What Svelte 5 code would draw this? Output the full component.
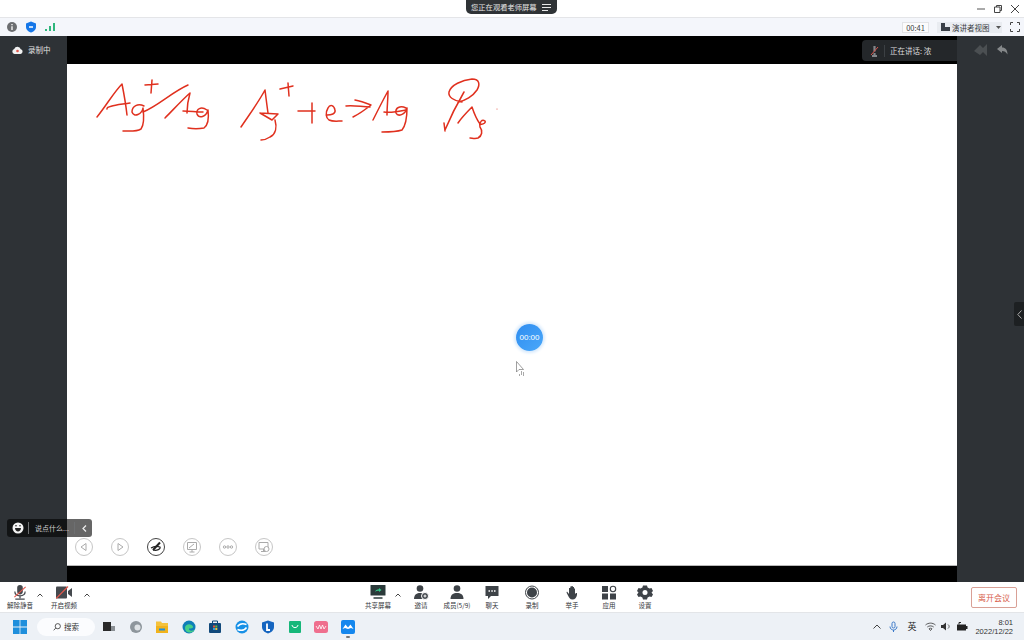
<script>
	const strokes = [
		// Ag+/Ag
		'M97 117C106 106 114 92 122 84C124 94 126 106 127 115',
		'M107 109C106 106 118 105 130 103',
		'M144 106C138 103 132 106 132 112C134 118 142 114 143 108C144 116 144 125 141 129C136 132 129 131 123 131',
		'M145 85L158 84M152 80L151 93',
		'M143 112C158 106 172 92 188 85',
		'M165 118C173 110 182 100 190 93C188 100 187 107 187 113',
		'M183 111C190 111 196 112 203 112',
		'M207 110C201 106 196 109 197 114C199 119 206 117 208 110C209 118 208 125 204 128C199 129 193 129 188 128',
		// Ag+ + e -> Ag
		'M241 127C249 115 258 103 265 90C266 98 267 106 268 113',
		'M260 113L278 114L272 120L260 113',
		'M275 120C277 127 276 134 270 137C267 139 264 140 261 140',
		'M280 89L293 86M288 83L289 96',
		'M298 111L315 111M312 103L312 123',
		'M327 115C331 115 336 114 335 110C334 105 330 104 328 108C325 113 326 118 329 120C333 122 338 121 342 121',
		'M346 106C354 105 362 107 370 107M355 100C361 101 366 103 371 105C366 109 359 114 353 117',
		'M373 120C378 110 383 100 388 91C388 99 387 107 387 115',
		'M384 112C390 113 396 112 406 110',
		'M406 108C400 105 395 108 396 113C398 117 405 115 407 108C407 116 406 125 402 130C396 132 389 132 382 132',
		// phi Ag
		'M462 102C454 101 448 97 449 92C451 85 462 80 472 79C480 79 480 85 477 90C473 96 465 101 458 102',
		'M464 92C457 104 450 118 445 130M444 123L445 131',
		'M458 123C462 117 467 112 472 107C474 113 477 120 480 124C484 125 486 122 485 121C482 119 479 122 480 127C483 131 482 136 478 138C475 139 472 138 470 138'
	];

	const slideTools = ['prev', 'next', 'pen', 'draw', 'more', 'screen'];
	const tools = [
		{ id: 'share', label: '共享屏幕' },
		{ id: 'caret' },
		{ id: 'invite', label: '邀请' },
		{ id: 'members', label: '成员(5/9)' },
		{ id: 'chat', label: '聊天' },
		{ id: 'record', label: '录制' },
		{ id: 'hand', label: '举手' },
		{ id: 'apps', label: '应用' },
		{ id: 'settings', label: '设置' }
	];
</script>

<div class="page">
	<header class="titlebar">
		<div class="notice">
			<span>您正在观看老师屏幕</span>
			<svg width="9" height="7" viewBox="0 0 9 7"><path d="M0 .5H9M0 3.5H9M0 6.5H6" stroke="#e8e8e8" fill="none" /></svg>
		</div>
		<div class="window-buttons">
			<svg width="10" height="10" viewBox="0 0 10 10"><path d="M1 5H9" stroke="#555" /></svg>
			<svg width="10" height="10" viewBox="0 0 10 10"><path d="M1.5 3H7V8.500H1.500ZM3.500 3V1.500H8.500V6.500H7" stroke="#444" fill="none" /></svg>
			<svg width="10" height="10" viewBox="0 0 10 10"><path d="M1 1L9 9M9 1L1 9" stroke="#444" /></svg>
		</div>
	</header>

	<div class="statusbar">
		<div class="status-icons">
			<svg width="12" height="12" viewBox="0 0 12 12"><circle cx="6" cy="6" r="5" fill="#6b6d70" /><path d="M6 3V4.200M6 5.200V9" stroke="#fff" stroke-width="1.300" /></svg>
			<svg width="12" height="12" viewBox="0 0 12 12"><path d="M6 .5L11 2.500V6C11 9 8.500 10.800 6 11.500C3.500 10.800 1 9 1 6V2.500Z" fill="#1677e8" /><path d="M4 6H8" stroke="#fff" stroke-width="1.500" /></svg>
			<svg width="12" height="12" viewBox="0 0 12 12"><path d="M2 8V10M6 5V10M10 2V10" stroke="#2fb67c" stroke-width="2" /></svg>
		</div>
		<div class="status-right">
			<span class="duration">00:41</span>
			<span class="view-select">
				<svg width="9" height="8" viewBox="0 0 9 8"><path d="M0 0H4V4H9V8H0Z" fill="#3a4048" /></svg>
				演讲者视图
				<svg class="caret-down" width="5" height="3" viewBox="0 0 5 3"><path d="M0 0H5L2.500 3Z" fill="#555" /></svg>
			</span>
			<svg width="10" height="10" viewBox="0 0 10 10"><path d="M.5 3V.5H3M7 .5H9.500V3M9.500 7V9.500H7M3 9.500H.5V7" stroke="#444" fill="none" /></svg>
		</div>
	</div>

	<main class="stage">
		<aside class="side">
			<div class="recording">
				<svg width="11" height="8" viewBox="0 0 11 8"><path d="M2.500 8A2.500 2.500 0 0 1 2.200 3.100A3.500 3.500 0 0 1 8.800 3.300A2.400 2.400 0 0 1 8.500 8Z" fill="#f1f1f1" /><circle cx="5.500" cy="5" r="1.300" fill="#e2574c" /></svg>
				<span>录制中</span>
			</div>
		</aside>

		<div class="canvas">
			<div class="slide">
				<svg class="ink" width="890" height="500" viewBox="67 64 890 500">
					{#each strokes as d}
						<path {d} />
					{/each}
					<circle cx="497" cy="109" r=".5" />
				</svg>

				<div class="slide-tools">
					{#each slideTools as t}
						<span class="round" class:dark={t === 'pen'}>
							<svg width="14" height="14" viewBox="0 0 14 14" fill="none" stroke={t === 'pen' ? '#222' : '#aaa'}>
								{#if t === 'prev'}
									<path d="M9 3.500V10.500L4 7Z" />
								{:else if t === 'next'}
									<path d="M5 3.500V10.500L10 7Z" />
								{:else if t === 'pen'}
									<path d="M2 8C5 6 8 6 11 7C12 9 8 11 4 10" stroke-width="1.200" />
									<path d="M4 10L11 2.500" stroke-width="2" />
								{:else if t === 'draw'}
									<path d="M2.500 2.500H11.500V9.500H2.500ZM7 9.500V12M4.500 12H9.500M4 8L9 4" />
								{:else if t === 'more'}
									<circle cx="3.500" cy="7" r="1.200" /><circle cx="7" cy="7" r="1.200" /><circle cx="10.500" cy="7" r="1.200" />
								{:else}
									<path d="M2 2.500H11V9H2ZM6.500 9V11.500M4 11.500H9" /><circle cx="9.500" cy="9" r="2.500" fill="#fff" />
								{/if}
							</svg>
						</span>
					{/each}
				</div>

				<div class="timer">00:00</div>
				<svg class="pointer" width="10" height="15" viewBox="0 0 10 15"><path d="M.5 .5V11L3 8.500H7.500Z" fill="#fff" stroke="#777" stroke-width=".7" /><path d="M5 11H6M7 12H8M5 13H6M7 14H8M3 14H4" stroke="#555" /></svg>
			</div>
		</div>

		<aside class="side right">
			<div class="undo">
				<svg width="22" height="12" viewBox="0 0 22 12"><path d="M0 7L6 1L11 6L6 11ZM7 6L13 0V12Z" fill="#4b4f52" /></svg>
				<svg width="11" height="10" viewBox="0 0 11 10"><path d="M0 4L5 0V2.500C8.500 2.500 10.500 5 10.500 9.500C9 7 7.500 6 5 6V8Z" fill="#85888a" /></svg>
			</div>
			<button class="collapse" aria-label="展开">
				<svg width="5" height="9" viewBox="0 0 5 9"><path d="M4.500 .5L.8 4.500L4.500 8.500" stroke="#aaa" fill="none" /></svg>
			</button>
		</aside>

		<div class="speaker">
			<svg width="9" height="12" viewBox="0 0 9 12"><path d="M4.500 1V6.500M2 11H7M4.500 8V11" stroke="#83868a" stroke-width="2.200" /><path d="M1 10L8 2" stroke="#d9534a" /></svg>
			<i></i>
			<span>正在讲话: 浓</span>
		</div>

		<div class="chat-pill">
			<svg width="12" height="12" viewBox="0 0 12 12"><circle cx="6" cy="6" r="5.500" fill="#f4f4f4" /><path d="M3 6H9C9 8 7.500 9.500 6 9.500C4.500 9.500 3 8 3 6Z" fill="#222" /><circle cx="4" cy="3.800" r=".8" fill="#222" /><circle cx="8" cy="3.800" r=".8" fill="#222" /></svg>
			<i></i>
			<span class="say">说点什么...</span>
			<i></i>
			<svg class="chev" width="5" height="7" viewBox="0 0 5 7"><path d="M4 .5L1 3.500L4 6.500" stroke="#eee" stroke-width="1.200" fill="none" /></svg>
		</div>
	</main>

	<footer class="toolbar">
		<div class="tools-left">
			<div class="tool mic">
				<svg width="18" height="16" viewBox="0 0 18 16">
					<rect x="6" y="0" width="6" height="10" rx="3" fill="#45494e" />
					<path d="M3.500 7C3.500 10 6 11.500 9 11.500C12 11.500 14.500 10 14.500 7M9 11.500V14M4 15H14" stroke="#45494e" stroke-width="1.300" fill="none" />
					<path d="M3 13L15 2" stroke="#e2574c" stroke-width="1.200" />
				</svg>
				<span>解除静音</span>
			</div>
			<svg class="up" width="6" height="4" viewBox="0 0 6 4"><path d="M.5 3.500L3 1L5.500 3.500" stroke="#444" fill="none" /></svg>
			<div class="tool cam">
				<svg width="16" height="12" viewBox="0 0 16 12">
					<rect x="0" y="0" width="11" height="12" rx="1" fill="#45494e" />
					<path d="M12 4.500L16 1.500V10.500L12 7.500Z" fill="#45494e" />
					<path d="M0 12L12 0" stroke="#e2574c" stroke-width="1.200" />
				</svg>
				<span>开启视频</span>
			</div>
			<svg class="up" width="6" height="4" viewBox="0 0 6 4"><path d="M.5 3.500L3 1L5.500 3.500" stroke="#444" fill="none" /></svg>
		</div>

		<div class="tools-center">
			{#each tools as t}
				{#if t.id === 'caret'}
					<svg class="up" width="6" height="4" viewBox="0 0 6 4"><path d="M.5 3.500L3 1L5.500 3.500" stroke="#444" fill="none" /></svg>
				{:else}
					<div class="tool">
						<svg width="16" height="15" viewBox="0 0 16 15">
							{#if t.id === 'share'}
								<rect x="0.500" y="0" width="15" height="10.500" rx=".5" fill="#2a3a3a" />
								<path d="M5 7C5.500 5 7 4.200 9 4.200V3L11.500 5L9 7V5.800C7.500 5.800 6 6 5 7Z" fill="#35c98a" />
								<path d="M3.500 13H12.500" stroke="#2a3a3a" stroke-width="1.500" />
							{:else if t.id === 'invite'}
								<circle cx="7" cy="3.500" r="3.300" fill="#3e4348" />
								<path d="M1 14C1 9.500 4 8 7 8C8.500 8 9.500 8.300 10.500 9V14Z" fill="#3e4348" />
								<circle cx="12" cy="11" r="3.500" fill="#3e4348" stroke="#fff" />
								<path d="M10.500 11H13.500M12 9.500V12.500" stroke="#fff" />
							{:else if t.id === 'members'}
								<circle cx="8" cy="3.500" r="3.300" fill="#3e4348" />
								<path d="M1.500 14C1.500 9.500 4.500 8 8 8C11.500 8 14.500 9.500 14.500 14Z" fill="#3e4348" />
							{:else if t.id === 'chat'}
								<path d="M1.500 1H14.500V11H7L4 14V11H1.500Z" fill="#3e4348" />
								<path d="M4.500 6H6M7.300 6H8.800M10 6H11.500" stroke="#fff" stroke-width="1.300" />
							{:else if t.id === 'record'}
								<circle cx="8" cy="7.500" r="6.500" fill="none" stroke="#3e4348" />
								<circle cx="8" cy="7.500" r="5" fill="#3e4348" />
							{:else if t.id === 'hand'}
								<path d="M3 6.500L5 9V3H6.300V1.500H7.500V1H8.800V2H10V3.500H11V9L12 8H13V10C12.500 12.500 11 14.500 8.500 14.500C6 14.500 5 12.500 4 10.500L2.500 7.500Z" fill="#3e4348" />
							{:else if t.id === 'apps'}
								<rect x="1" y="1" width="6" height="6" fill="#3e4348" />
								<circle cx="12" cy="4" r="2.700" fill="none" stroke="#3e4348" stroke-width="1.100" />
								<rect x="1" y="8.500" width="6" height="6" fill="#3e4348" />
								<rect x="9" y="8.500" width="6" height="6" fill="#3e4348" />
							{:else}
								<path d="M6 .5H10L10.600 2.500L12.500 3.500L14.500 3L16 6L14.500 7.500L16 9.500L14.500 12L12.500 11.500L10.600 12.500L10 14.500H6L5.400 12.500L3.500 11.500L1.500 12L0 9.500L1.500 7.500L0 6L1.500 3L3.500 3.500L5.400 2.500Z" fill="#3e4348" />
								<circle cx="8" cy="7.500" r="2.500" fill="#fff" />
							{/if}
						</svg>
						<span>{t.label}</span>
					</div>
				{/if}
			{/each}
		</div>

		<div class="tools-right">
			<button class="leave">离开会议</button>
		</div>
	</footer>

	<nav class="taskbar">
		<div class="task-left">
			<svg class="winlogo" width="14" height="14" viewBox="0 0 14 14"><path d="M0 0H6.600V6.600H0ZM7.400 0H14V6.600H7.400ZM0 7.400H6.600V14H0ZM7.400 7.400H14V14H7.400Z" fill="#1f8fdc" /></svg>
			<div class="search">
				<svg width="8" height="8" viewBox="0 0 8 8"><circle cx="4.800" cy="3.200" r="2.600" fill="none" stroke="#333" stroke-width=".8" /><path d="M2.800 5L.7 7.300" stroke="#333" stroke-width=".8" /></svg>
				<span>搜索</span>
			</div>
			<div class="apps">
				<svg width="14" height="14" viewBox="0 0 14 14"><rect x="1" y="2" width="8" height="9" fill="#2a2a2a" /><rect x="9" y="6" width="4" height="5" fill="#8a8f94" /></svg>
				<svg width="14" height="14" viewBox="0 0 14 14"><circle cx="7" cy="7" r="6" fill="#8e969c" /><circle cx="8.500" cy="7.500" r="3" fill="#dfe3e6" /></svg>
				<svg width="14" height="14" viewBox="0 0 14 14"><path d="M1 1.500H6L7 3H13V6H1Z" fill="#f5c23c" /><path d="M1 6H13V13H1Z" fill="#f1b31c" /><path d="M4 9.500H10" stroke="#1f8fdc" stroke-width="2" /></svg>
				<svg width="14" height="14" viewBox="0 0 14 14"><circle cx="7" cy="7" r="6.500" fill="#0f7fb8" /><path d="M3 8C3 4 9 3 11 6.500C11.500 8 10 8.500 7 8.500C6.500 10.500 9 11.500 12.500 10C10 14 3 13.500 3 8Z" fill="#46d08a" /></svg>
				<svg width="14" height="14" viewBox="0 0 14 14"><rect x="1" y="3" width="12" height="10" rx="1" fill="#124a7c" /><path d="M4.500 3V1H9.500V3" stroke="#124a7c" fill="none" /><rect x="5" y="5.500" width="2" height="2" fill="#e8533a" /><rect x="7.300" y="5.500" width="2" height="2" fill="#6cbb3c" /><rect x="5" y="8" width="2" height="2" fill="#2b9fe0" /><rect x="7.300" y="8" width="2" height="2" fill="#f5c23c" /></svg>
				<svg width="14" height="14" viewBox="0 0 14 14"><circle cx="7" cy="7" r="6.500" fill="#1790e6" /><path d="M2.500 6.500C5 3 9 3.500 11.500 4.500M2.500 9.500C5 10.500 9 11 11.500 7.500" stroke="#fff" stroke-width="1.500" fill="none" /></svg>
				<svg width="14" height="14" viewBox="0 0 14 14"><path d="M7 .5L13 2.500V7C13 10.500 10 12.500 7 13.500C4 12.500 1 10.500 1 7V2.500Z" fill="#1565c0" /><path d="M6 3.500V10H9" stroke="#fff" stroke-width="1.800" fill="none" /></svg>
				<svg width="14" height="14" viewBox="0 0 14 14"><rect x="1" y="1" width="12" height="12" rx="1" fill="#16b77a" /><path d="M4 5C4.500 8.500 9.500 8.500 10 5" stroke="#fff" fill="none" /></svg>
				<svg width="14" height="14" viewBox="0 0 14 14"><rect x="0" y="1" width="14" height="12" rx="2.500" fill="#ef6f8e" /><path d="M2 6L4 9L5.500 5L7 9L8.500 5L10 9L12 6" stroke="#fff" stroke-width=".8" fill="none" /></svg>
				<div class="app-active">
					<svg width="14" height="14" viewBox="0 0 14 14"><rect x="0" y="0" width="14" height="14" rx="2" fill="#1487ee" /><path d="M1.500 9L4.500 4.500L7 7.500L9.500 4.500L12.500 9L10 8L7 9L4 8Z" fill="#fff" /></svg>
				</div>
			</div>
		</div>
		<div class="tray">
			<svg class="tray-caret" width="8" height="5" viewBox="0 0 8 5"><path d="M.5 4.500L4 1L7.500 4.500" stroke="#444" fill="none" /></svg>
			<svg width="9" height="12" viewBox="0 0 9 12"><rect x="3" y="1" width="3" height="6" rx="1.500" fill="none" stroke="#3a79c9" /><path d="M1 5.500C1 8 3 9 4.500 9C6 9 8 8 8 5.500M4.500 9V11" stroke="#3a79c9" fill="none" /></svg>
			<span class="lang">英</span>
			<svg width="11" height="9" viewBox="0 0 11 9"><path d="M.5 3C3.500 .5 7.500 .5 10.500 3M2.300 5C4 3.500 7 3.500 8.700 5M5.500 8.500L4 6.800C5 6 6 6 7 6.800Z" stroke="#333" stroke-width=".8" fill="none" /></svg>
			<svg width="10" height="9" viewBox="0 0 10 9"><path d="M0 3H2L5 .5V8.500L2 6H0Z" fill="#333" /><path d="M7 2.500C8.500 3.500 8.500 5.500 7 6.500" stroke="#555" fill="none" /></svg>
			<svg width="12" height="9" viewBox="0 0 12 9"><rect x="1" y="2.500" width="9" height="6" fill="#222" /><rect x="10" y="4" width="1.500" height="3" fill="#222" /><path d="M3 2.500L3 .5H5" stroke="#222" fill="none" /></svg>
			<div class="clock">
				<span>8:01</span>
				<span>2022/12/22</span>
			</div>
		</div>
	</nav>
</div>

<style>
	:global(body) {
		margin: 0;
		font-family: 'Noto Sans CJK SC', 'Noto Sans', sans-serif;
	}

	.page {
		display: flex;
		flex-direction: column;
		width: 1024px;
		height: 640px;
		overflow: hidden;
		position: relative;
	}

	.titlebar {
		height: 18px;
		background: #fff;
		border-bottom: 1px solid #e4e5e8;
		box-sizing: border-box;
		display: flex;
		justify-content: flex-end;
		flex: none;
	}

	.notice {
		position: absolute;
		left: 466px;
		top: 0;
		width: 91px;
		height: 14px;
		box-sizing: border-box;
		padding: 0 6px 0 5px;
		background: #2f3336;
		border-radius: 0 0 5px 5px;
		display: flex;
		align-items: center;
		justify-content: space-between;
		color: #e4e4e4;
		font-size: 7.300px;
		z-index: 2;
	}

	.window-buttons {
		display: flex;
		align-items: center;
		gap: 7px;
		padding-right: 4px;
		height: 17px;
	}

	.statusbar {
		height: 18px;
		background: #f4f6fb;
		display: flex;
		align-items: center;
		justify-content: space-between;
		padding: 0 4px 0 6px;
		flex: none;
	}

	.status-icons {
		display: flex;
		gap: 7px;
	}

	.status-right {
		display: flex;
		align-items: center;
		gap: 8px;
		color: #3a3d42;
		font-size: 7.500px;
	}

	.duration {
		width: 27px;
		height: 11px;
		background: #fbfbfc;
		border: 1px solid #e2e3e6;
		box-sizing: border-box;
		display: flex;
		align-items: center;
		justify-content: center;
	}

	.view-select {
		width: 65px;
		height: 11px;
		background: #e9ecf1;
		display: flex;
		align-items: center;
		gap: 2px;
		padding-left: 4px;
		box-sizing: border-box;
	}

	.caret-down {
		margin-left: 4px;
	}

	.stage {
		flex: 1;
		display: grid;
		grid-template-columns: 67px 1fr 67px;
		min-height: 0;
		position: relative;
	}

	.side {
		background: #2e3236;
		position: relative;
	}

	.recording {
		display: flex;
		align-items: center;
		gap: 5px;
		padding: 9px 0 0 12px;
		color: #e4e4e4;
		font-size: 7.500px;
		line-height: 9px;
	}

	.canvas {
		background: #000;
		padding: 28px 0 16px;
		display: flex;
	}

	.slide {
		flex: 1;
		background: #fff;
		border-bottom: 1px solid #b9b9b9;
		position: relative;
	}

	.ink {
		position: absolute;
		left: 0;
		top: 0;
	}

	.ink path {
		fill: none;
		stroke: #e0301e;
		stroke-width: 1.500;
		stroke-linecap: round;
		stroke-linejoin: round;
	}

	.ink circle {
		fill: #e0301e;
	}

	.slide-tools {
		position: absolute;
		left: 8px;
		bottom: 9px;
		display: flex;
		gap: 18px;
	}

	.round {
		width: 18px;
		height: 18px;
		border: 1px solid #c6c6c6;
		border-radius: 50%;
		box-sizing: border-box;
		display: flex;
		align-items: center;
		justify-content: center;
		background: #fff;
	}

	.round.dark {
		border-color: #444;
	}

	.timer {
		position: absolute;
		left: 449px;
		top: 260px;
		width: 27px;
		height: 27px;
		border-radius: 50%;
		background: linear-gradient(135deg, #2f8df0, #4aa8fa);
		box-shadow: 0 0 3px 2px #d8eafc;
		color: #fff;
		font: 8px/27px 'Liberation Sans', sans-serif;
		text-align: center;
	}

	.pointer {
		position: absolute;
		left: 449px;
		top: 297px;
	}

	.undo {
		position: absolute;
		left: 17px;
		top: 8px;
		display: flex;
		align-items: center;
		gap: 1px;
	}

	.collapse {
		position: absolute;
		right: 0;
		top: 266px;
		width: 10px;
		height: 24px;
		padding: 0;
		border: 0;
		border-radius: 2px 0 0 2px;
		background: #1d2022;
		display: flex;
		align-items: center;
		justify-content: center;
	}

	.speaker {
		position: absolute;
		left: 862px;
		top: 4px;
		width: 95px;
		height: 21px;
		box-sizing: border-box;
		padding-left: 8px;
		background: #24272a;
		border-radius: 4px 0 0 4px;
		display: flex;
		align-items: center;
		gap: 5px;
		color: #dcdcdc;
		font-size: 7.500px;
	}

	.speaker i {
		width: 1px;
		height: 12px;
		background: #3c4044;
	}

	.chat-pill {
		position: absolute;
		left: 7px;
		top: 483px;
		width: 85px;
		height: 18px;
		background: rgba(0, 0, 0, 0.6);
		border-radius: 3px;
		display: flex;
		align-items: center;
		color: #cfcfcf;
		font-size: 7px;
		box-sizing: border-box;
		padding-left: 5px;
	}

	.chat-pill i {
		width: 1px;
		height: 12px;
		background: #6d6f71;
		margin-left: 4px;
	}

	.say {
		width: 35px;
		margin-left: 6px;
		white-space: nowrap;
	}

	.chev {
		margin-left: 7px;
	}

	.toolbar {
		height: 30px;
		background: #fff;
		display: grid;
		grid-template-columns: 1fr 300px 1fr;
		flex: none;
	}

	.tools-left {
		display: grid;
		grid-template-columns: 30px 10px 38px 8px;
		padding-left: 5px;
		align-items: start;
	}

	.tools-center {
		display: grid;
		grid-template-columns: 32px 8px 38px 34px 36px 44px 36px 38px 34px;
		align-items: start;
	}

	.tool {
		display: flex;
		flex-direction: column;
		align-items: center;
		padding-top: 3px;
		white-space: nowrap;
	}

	.tool svg {
		height: 15px;
	}

	.tool span {
		font-size: 6.500px;
		line-height: 9px;
		margin-top: 1px;
		color: #33363a;
	}

	.up {
		justify-self: center;
		margin-top: 11px;
	}

	.tools-right {
		display: flex;
		justify-content: flex-end;
		align-items: center;
		padding-right: 7px;
	}

	.leave {
		width: 46px;
		height: 21px;
		padding: 0;
		background: #fff;
		border: 1px solid #d9a096;
		border-radius: 2px;
		color: #d8604c;
		font: 8px 'Noto Sans CJK SC', sans-serif;
	}

	.taskbar {
		height: 28px;
		background: #edf1f6;
		border-top: 1px solid #e3e5e8;
		box-sizing: border-box;
		display: flex;
		align-items: center;
		justify-content: space-between;
		flex: none;
	}

	.task-left {
		display: flex;
		align-items: center;
	}

	.winlogo {
		margin: 0 10px 0 13px;
	}

	.search {
		width: 58px;
		height: 18px;
		background: #fbfcfe;
		border-radius: 9px;
		display: flex;
		align-items: center;
		justify-content: center;
		gap: 3px;
		font-size: 7.500px;
		color: #333;
	}

	.apps {
		display: flex;
		align-items: center;
		gap: 12.500px;
		margin-left: 7px;
	}

	.app-active {
		position: relative;
		display: flex;
	}

	.app-active::after {
		content: '';
		position: absolute;
		left: 5px;
		bottom: -4px;
		width: 4px;
		height: 2px;
		background: #777;
		border-radius: 1px;
	}

	.tray {
		display: flex;
		align-items: center;
		gap: 5px;
		padding-right: 11px;
		color: #222;
	}

	.tray-caret {
		margin-right: 3px;
	}

	.lang {
		font-size: 9px;
		margin: 0 4px;
	}

	.clock {
		display: flex;
		flex-direction: column;
		align-items: flex-end;
		margin-left: 2px;
		font: 7.500px/9px 'Liberation Sans', sans-serif;
		color: #333;
	}
</style>
